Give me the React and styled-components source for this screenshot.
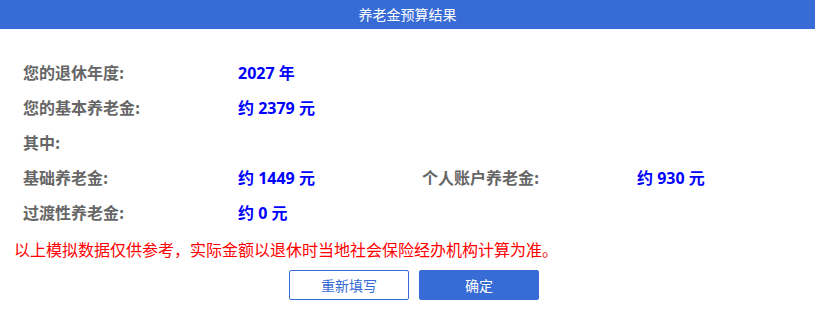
import React from "react";
import styled, { createGlobalStyle } from "styled-components";

const Global = createGlobalStyle`
  html, body { margin: 0; padding: 0; background: #fff; }
  body { font-family: "Noto Sans CJK SC", "Noto Sans", sans-serif; }
`;

const Page = styled.div`
  width: 815px;
  height: 320px;
  background: #fff;
`;

const Header = styled.div`
  height: 29px;
  line-height: 29px;
  background: #376bd5;
  color: #fff;
  font-size: 14px;
  text-align: center;
`;

const Rows = styled.div`
  padding: 25px 0 0 23px;
  display: flex;
  flex-direction: column;
`;

const Row = styled.div`
  display: flex;
  height: 35px;
  align-items: center;
`;

const Label = styled.div`
  width: 215px;
  font-size: 16px;
  font-weight: 700;
  color: #666;
  white-space: nowrap;
`;

const Value = styled.div`
  width: ${(p) => (p.$wide ? "184px" : "auto")};
  font-family: "Noto Sans", "Noto Sans CJK SC", sans-serif;
  font-size: 16px;
  font-weight: 700;
  color: #0000ff;
  white-space: nowrap;
`;

const Notice = styled.div`
  margin-top: 8px;
  padding-left: 14px;
  font-size: 16px;
  line-height: 24px;
  color: #ff0000;
  white-space: nowrap;
`;

const Buttons = styled.div`
  margin-top: 9px;
  display: flex;
  justify-content: center;
  gap: 10px;
  padding-left: 13px;
`;

const Button = styled.button`
  width: 120px;
  height: 30px;
  box-sizing: border-box;
  border-radius: 2px;
  border: 1px solid #376bd5;
  background: ${(p) => (p.$primary ? "#376bd5" : "#fff")};
  color: ${(p) => (p.$primary ? "#fff" : "#376bd5")};
  font-family: "Noto Sans CJK SC", "Noto Sans", sans-serif;
  font-size: 14px;
  padding: 0;
  cursor: pointer;
`;

export default function App() {
  return (
    <Page>
      <Global />
      <Header>养老金预算结果</Header>
      <Rows>
        <Row>
          <Label>您的退休年度:</Label>
          <Value>2027 年</Value>
        </Row>
        <Row>
          <Label>您的基本养老金:</Label>
          <Value>约 2379 元</Value>
        </Row>
        <Row>
          <Label>其中:</Label>
        </Row>
        <Row>
          <Label>基础养老金:</Label>
          <Value $wide>约 1449 元</Value>
          <Label>个人账户养老金:</Label>
          <Value>约 930 元</Value>
        </Row>
        <Row>
          <Label>过渡性养老金:</Label>
          <Value>约 0 元</Value>
        </Row>
      </Rows>
      <Notice>以上模拟数据仅供参考，实际金额以退休时当地社会保险经办机构计算为准。</Notice>
      <Buttons>
        <Button>重新填写</Button>
        <Button $primary>确定</Button>
      </Buttons>
    </Page>
  );
}
